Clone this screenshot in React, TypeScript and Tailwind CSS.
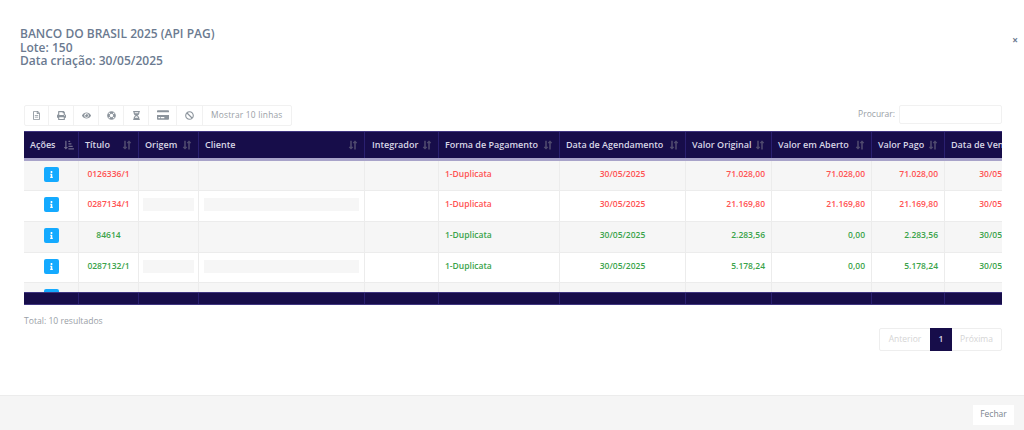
import React from "react";
import { FaRegFileAlt, FaPrint, FaEye, FaLifeRing, FaHourglassHalf, FaCreditCard, FaBan, FaInfo, FaSortAmountDownAlt, FaLongArrowAltDown, FaLongArrowAltUp } from "react-icons/fa";

const cols = "grid grid-cols-[55px_60px_60px_166px_74px_121px_126px_86px_100px_73px_115px] w-[1036px]";
const heads = ["Ações", "Título", "Origem", "Cliente", "Integrador", "Forma de Pagamento", "Data de Agendamento", "Valor Original", "Valor em Aberto", "Valor Pago", "Data de Vencimento"];
const rows = [
  { t: "0126336/1", c: "text-[#ff5252]", f: "71.028,00", a: "71.028,00", p: "71.028,00", hid: false, h: "h-[30px]" },
  { t: "0287134/1", c: "text-[#ff5252]", f: "21.169,80", a: "21.169,80", p: "21.169,80", hid: true, h: "h-[31px]" },
  { t: "84614", c: "text-[#3aa34a]", f: "2.283,56", a: "0,00", p: "2.283,56", hid: false, h: "h-[31px]" },
  { t: "0287132/1", c: "text-[#3aa34a]", f: "5.178,24", a: "0,00", p: "5.178,24", hid: true, h: "h-[30px]" },
  { t: "", c: "text-[#3aa34a]", f: "", a: "", p: "", hid: false, h: "h-[31px]" },
];
const tools = [
  [<FaRegFileAlt />, "w-[24px]"],
  [<FaPrint />, "w-[25px]"],
  [<FaEye />, "w-[25px]"],
  [<FaLifeRing />, "w-[25px]"],
  [<FaHourglassHalf />, "w-[25px]"],
  [<FaCreditCard className="text-[12px]" />, "w-[28px]"],
  [<FaBan />, "w-[26px]"],
] as const;

function Sort({ first }: { first?: boolean }) {
  if (first) return <FaSortAmountDownAlt className="text-[10px] text-[#6f6b8a] shrink-0" />;
  return (
    <span className="flex shrink-0 text-[#4f4a6e] text-[10px] -space-x-[6px]">
      <FaLongArrowAltDown />
      <FaLongArrowAltUp />
    </span>
  );
}

function Cell({ className = "", children }: { className?: string; children?: React.ReactNode }) {
  return <div className={`flex items-center border-r border-[#ececec] overflow-hidden whitespace-nowrap pb-[2px] ${className}`}>{children}</div>;
}

export default function App() {
  return (
    <div className="w-[1024px] h-[430px] bg-white flex flex-col overflow-hidden font-['Open_Sans',sans-serif]">
      <div className="flex-1 min-h-0 relative">
        <span className="absolute right-[6px] top-[35px] text-[10px] leading-none font-bold text-[#6b7a90]">×</span>
        <div className="pt-[27px] pl-[20px] text-[12px] leading-[13.5px] font-semibold text-[#6b7a90]">
          <div>BANCO DO BRASIL 2025 (API PAG)</div>
          <div>Lote: 150</div>
          <div>Data criação: 30/05/2025</div>
        </div>
        <div className="ml-[24px] w-[978px] mt-[37px] flex items-start justify-between">
          <div className="flex h-[21px] border border-[#f1f1f1] rounded-[2px] text-[#8c949c] text-[9px]">
            {tools.map(([icon, w], i) => (
              <div key={i} className={`${w} flex items-center justify-center border-r border-[#f1f1f1]`}>{icon}</div>
            ))}
            <div className="px-[8px] flex items-center text-[8.4px] text-[#9aa0a6] tracking-[0.2px]">Mostrar 10 linhas</div>
          </div>
          <div className="flex items-center gap-[4px]">
            <span className="text-[8.5px] text-[#9aa0a6]">Procurar:</span>
            <div className="w-[103px] h-[19px] border border-[#f1f1f1] rounded-[2px]" />
          </div>
        </div>
        <div className="ml-[24px] mt-[5px] w-[978px] overflow-hidden">
          <div className={`${cols} h-[30px] bg-[#170d4a] border-y border-[#3f3580] border-b-[3px] border-b-[#a8a3c9] box-border`}>
            {heads.map((h, i) => (
              <div key={h} className={`flex items-center justify-between ${h === "Integrador" ? "pl-[7px]" : "pl-[6px]"} pr-[4px] border-r border-[#2a2070] overflow-hidden whitespace-nowrap text-[9px] font-semibold text-[#d9d7e6]`}>
                <span>{h}</span>
                <Sort first={i === 0} />
              </div>
            ))}
          </div>
          <div className="h-[131px] overflow-hidden">
            {rows.map((r, i) => (
              <div key={i} className={`${cols} ${r.h} border-b border-[#ececec] text-[8.5px] font-semibold ${i % 2 === 0 ? "bg-[#f6f6f6]" : "bg-white"} ${r.c}`}>
                <Cell className="justify-center">
                  <span className={`w-[15px] h-[15px] rounded-[2px] bg-[#14aaff] text-white flex items-center justify-center text-[7px] ${i === 4 ? "self-start mt-[6px]" : ""}`}><FaInfo /></span>
                </Cell>
                <Cell className="justify-center">{r.t}</Cell>
                <Cell className="px-[4px]">{r.hid && <div className="w-full h-[13px] bg-[#f6f6f6]" />}</Cell>
                <Cell className="px-[5px]">{r.hid && <div className="w-full h-[13px] bg-[#f6f6f6]" />}</Cell>
                <Cell />
                <Cell className="pl-[6px]">{r.t && "1-Duplicata"}</Cell>
                <Cell className="justify-center">{r.t && "30/05/2025"}</Cell>
                <Cell className="justify-end pr-[6px]">{r.f}</Cell>
                <Cell className="justify-end pr-[6px]">{r.a}</Cell>
                <Cell className="justify-end pr-[6px]">{r.p}</Cell>
                <Cell className="justify-center">{r.t && "30/05/2025"}</Cell>
              </div>
            ))}
          </div>
          <div className={`${cols} h-[13px] bg-[#170d4a] border-y border-[#3f3580]`}>
            {heads.map((h) => <div key={h} className="border-r border-[#2a2070]" />)}
          </div>
        </div>
        <div className="mx-[24px] mt-[10px] text-[8.6px] leading-[12px] text-[#9aa0a6]">Total: 10 resultados</div>
        <div className="mx-[22px] mt-[1px] flex justify-end">
          <div className="flex h-[23px] text-[8.5px] text-[#d5d5d5] border border-[#eeeeee] rounded-[2px]">
            <div className="w-[50px] flex items-center justify-center">Anterior</div>
            <div className="w-[22px] -my-px flex items-center justify-center bg-[#170d4a] text-[#d9d7e6] font-semibold">1</div>
            <div className="w-[49px] flex items-center justify-center">Próxima</div>
          </div>
        </div>
      </div>
      <div className="h-[35px] bg-[#f5f5f5] border-t border-[#ececec] flex items-center justify-end pr-[10px]">
        <div className="w-[41px] h-[20px] bg-white flex items-center justify-center text-[8.5px] text-[#7b858e] mt-[3px]">Fechar</div>
      </div>
    </div>
  );
}
